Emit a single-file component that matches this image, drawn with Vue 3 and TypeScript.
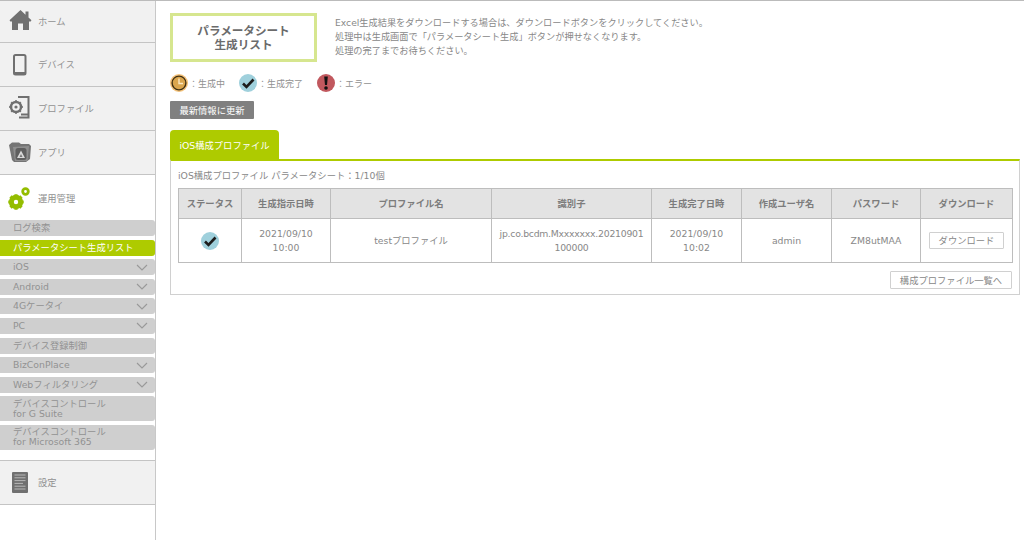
<script setup lang="ts">
const subItems = [
  { label: 'ログ検索' },
  { label: 'パラメータシート生成リスト', active: true },
  { label: 'iOS', chev: true },
  { label: 'Android', chev: true },
  { label: '4Gケータイ', chev: true },
  { label: 'PC', chev: true },
  { label: 'デバイス登録制御' },
  { label: 'BizConPlace', chev: true },
  { label: 'Webフィルタリング', chev: true },
  { label: 'デバイスコントロール\nfor G Suite', tall: true },
  { label: 'デバイスコントロール\nfor Microsoft 365', tall: true },
]
const headers = ['ステータス', '生成指示日時', 'プロファイル名', '識別子', '生成完了日時', '作成ユーザ名', 'パスワード', 'ダウンロード']
const colWidths = [63, 89, 161, 160, 90, 90, 89, 92]
</script>

<template>
  <div class="page">
    <aside class="side">
      <a class="nav">
        <svg class="ico" width="32" height="32" viewBox="0 0 32 32"><path d="M16.500 5 L21.500 9.700 V6.500 H24.500 V12.500 L27.500 15.300 L26 17 L25 16 V25 H19 V18.500 H14 V25 H8 V16 L7 17 L5.500 15.300 Z" fill="#707070"/></svg>
        <span>ホーム</span>
      </a>
      <a class="nav">
        <svg class="ico" width="32" height="32" viewBox="0 0 32 32"><rect x="10" y="7" width="11.500" height="19.500" rx="1.500" fill="none" stroke="#707070" stroke-width="2" /><rect x="10" y="24" width="11.500" height="3" fill="#707070"/></svg>
        <span>デバイス</span>
      </a>
      <a class="nav">
        <svg class="ico" width="32" height="32" viewBox="0 0 32 32"><path d="M14 5 H24.500 V25.500 H15" fill="none" stroke="#707070" stroke-width="2"/><path d="M17 22.500H24" stroke="#707070" stroke-width="2"/><circle cx="12" cy="15" r="5" fill="#f1f1f1" stroke="#707070" stroke-width="2.500"/><circle cx="12" cy="15" r="1.600" fill="#707070"/><path d="M12 8.200V10M12 20V21.800M5.200 15H7M17 15H18.800M7.200 10.200L8.500 11.500M15.500 18.500L16.800 19.800M7.200 19.800L8.500 18.500M15.500 11.500L16.800 10.200" stroke="#707070" stroke-width="2"/></svg>
        <span>プロファイル</span>
      </a>
      <a class="nav">
        <svg class="ico" width="32" height="32" viewBox="0 0 32 32"><path d="M5 9 L8 6.500 H15 L17 8 H25 L27 10 L26 23 L22 26 H10 L8 24 Z" fill="#757575"/><path d="M9 11 L25 10 L23.500 25 H11 Z" fill="#8f8f8f"/><rect x="11.500" y="12" width="11" height="12" rx="2.500" fill="#5f5f5f"/><path d="M17 14.500 L21 22 H13 Z" fill="#d8d8d8"/><path d="M17 18 L18.500 21 H15.500 Z" fill="#777"/></svg>
        <span>アプリ</span>
      </a>
      <a class="nav current">
        <svg class="ico" width="32" height="32" viewBox="0 0 32 32">
          <circle cx="12" cy="20" r="4.700" fill="none" stroke="#94bd00" stroke-width="5"/>
          <path d="M12 12.300V15M12 25V27.700M4.300 20H7M17 20H19.700M6.500 14.500L8.500 16.500M15.500 23.500L17.500 25.500M6.500 25.500L8.500 23.500M15.500 16.500L17.500 14.500" stroke="#94bd00" stroke-width="3.200"/>
          <circle cx="21.500" cy="9.500" r="2.800" fill="none" stroke="#94bd00" stroke-width="2.800"/>
        </svg>
        <span>運用管理</span>
      </a>
      <ul class="sub">
        <li v-for="item in subItems" :key="item.label" :class="{ active: item.active, tall: item.tall }">
          <span class="sub-label">{{ item.label }}</span>
          <svg v-if="item.chev" class="chev" width="12" height="7" viewBox="0 0 12 7"><path d="M1 1 L6 6 L11 1" fill="none" stroke="#999" stroke-width="1.100"/></svg>
        </li>
      </ul>
      <a class="nav setting">
        <svg class="ico" width="32" height="32" viewBox="0 0 32 32"><rect x="8" y="6" width="16" height="21" rx="1" fill="#707070"/><path d="M10.500 9H21.500M10.500 11.800H21.500M10.500 14.600H21.500M10.500 17.400H19M10.500 20.200H21.500M10.500 23H21.500" stroke="#b8b8b8" stroke-width="1"/></svg>
        <span>設定</span>
      </a>
    </aside>

    <main class="main">
      <header class="head">
        <h1 class="title">パラメータシート<br />生成リスト</h1>
        <p class="desc">Excel生成結果をダウンロードする場合は、ダウンロードボタンをクリックしてください。<br />処理中は生成画面で「パラメータシート生成」ボタンが押せなくなります。<br />処理の完了までお待ちください。</p>
      </header>

      <div class="legend">
        <span class="leg">
          <svg width="18" height="18" viewBox="0 0 18 18"><circle cx="9" cy="9" r="9" fill="#f4c27a"/><circle cx="9" cy="9" r="6.900" fill="#dba64e" stroke="#3f3014" stroke-width="1.400"/><path d="M9 4.500V9.500H13" fill="none" stroke="#fbe9c4" stroke-width="1.400"/></svg>
          <span>：生成中</span>
        </span>
        <span class="leg">
          <svg width="18" height="18" viewBox="0 0 18 18"><circle cx="9" cy="9" r="9" fill="#9fd0dc"/><path d="M4 9.500L7.500 13L14.500 5.500" fill="none" stroke="#1c1c1c" stroke-width="2.600"/></svg>
          <span>：生成完了</span>
        </span>
        <span class="leg">
          <svg width="18" height="18" viewBox="0 0 18 18"><circle cx="9" cy="9" r="9" fill="#c1585e"/><path d="M7.200 2.500H10.800L10 11H8Z" fill="#111"/><circle cx="9" cy="14" r="1.800" fill="#111"/></svg>
          <span>：エラー</span>
        </span>
      </div>

      <button class="refresh" type="button">最新情報に更新</button>

      <div class="tabs"><span class="tab">iOS構成プロファイル</span></div>

      <section class="panel">
        <p class="count">iOS構成プロファイル パラメータシート：1/10個</p>
        <table class="tbl">
          <colgroup>
            <col v-for="(w, i) in colWidths" :key="i" :style="{ width: w + 'px' }" />
          </colgroup>
          <thead>
            <tr><th v-for="h in headers" :key="h">{{ h }}</th></tr>
          </thead>
          <tbody>
            <tr>
              <td><svg class="status" width="18" height="18" viewBox="0 0 18 18"><circle cx="9" cy="9" r="9" fill="#9fd0dc"/><path d="M4 9.500L7.500 13L14.500 5.500" fill="none" stroke="#1c1c1c" stroke-width="2.600"/></svg></td>
              <td>2021/09/10<br />10:00</td>
              <td>testプロファイル</td>
              <td class="ident">jp.co.bcdm.Mxxxxxxx.20210901<br />100000</td>
              <td>2021/09/10<br />10:02</td>
              <td>admin</td>
              <td>ZM8utMAA</td>
              <td><button class="btn dl" type="button">ダウンロード</button></td>
            </tr>
          </tbody>
        </table>
        <div class="foot"><button class="btn list" type="button">構成プロファイル一覧へ</button></div>
      </section>
    </main>
  </div>
</template>

<style>
html, body { margin: 0; background: #fff; }
</style>

<style scoped>
.page {
  display: flex;
  width: 1024px;
  height: 540px;
  overflow: hidden;
  font-family: "DejaVu Sans", "Noto Sans CJK JP", sans-serif;
  font-size: 9.300px;
  color: #888;
  border-top: 1px solid #bbb;
  box-sizing: border-box;
}
.side {
  width: 156px;
  flex: none;
  border-right: 1px solid #c8c8c8;
  box-sizing: border-box;
}
.nav {
  display: flex;
  align-items: center;
  height: 44px;
  box-sizing: border-box;
  background: #f1f1f1;
  border-bottom: 1px solid #c4c4c4;
  padding: 0 0 2px 4px;
  gap: 2px;
}
.nav:first-child { height: 42px; }
.nav span { font-size: 9.300px; color: #919191; }
.ico { flex: none; }
.current { background: #fff; border-bottom: 0; height: 45px; padding-bottom: 0; }
.setting { margin-top: 10px; border-top: 1px solid #c4c4c4; height: 45px; padding-bottom: 0; }
.sub {
  list-style: none;
  margin: 0;
  padding: 0;
  display: flex;
  flex-direction: column;
  gap: 3.600px;
}
.sub li {
  display: flex;
  align-items: center;
  justify-content: space-between;
  height: 16px;
  padding: 0 7px 0 13px;
  background: #cfcfcf;
  border-radius: 0 3px 3px 0;
  font-size: 9.300px;
  line-height: 10px;
  color: #929292;
}
.sub li.active { background: #aecb00; color: #fff; }
.sub li.tall { height: 25px; }
.sub-label { white-space: pre-line; }
.main {
  flex: 1;
  min-width: 0;
  padding: 12px 4px 0 14px;
}
.head { display: flex; align-items: center; gap: 18px; }
.title {
  width: 147px;
  height: 49px;
  box-sizing: border-box;
  margin: 0;
  padding-top: 8px;
  text-align: center;
  border: 3px solid #d6e68f;
  font-size: 11.600px;
  line-height: 14px;
  font-weight: 700;
  color: #6b6b6b;
}
.desc {
  margin: 0 0 2px;
  font-size: 9.200px;
  line-height: 14px;
  color: #888;
}
.legend { display: flex; gap: 14px; margin-top: 12px; align-items: center; height: 18px; }
.leg { display: flex; align-items: center; gap: 1px; font-size: 9px; color: #919191; }
.refresh {
  display: block;
  margin-top: 9px;
  width: 84px;
  height: 18px;
  padding: 0;
  border: 0;
  border-radius: 1px;
  background: #808080;
  color: #fff;
  font: inherit;
}
.tabs { margin-top: 11px; display: flex; }
.tab {
  width: 109px;
  height: 29px;
  display: flex;
  align-items: center;
  justify-content: center;
  background: #aecb00;
  color: #fff;
  border-radius: 4px 4px 0 0;
  font-size: 9.300px;
}
.panel {
  border: 1px solid #d0d0d0;
  border-top: 2px solid #aecb00;
  height: 136px;
  box-sizing: border-box;
  padding: 0 7px;
}
.count { margin: 0; height: 27px; line-height: 29px; font-size: 9.300px; color: #888; }
.tbl {
  table-layout: fixed;
  width: 834px;
  border-collapse: collapse;
  font-size: 9.300px;
  color: #888;
}
.tbl th, .tbl td {
  border: 1px solid #bdbdbd;
  text-align: center;
  vertical-align: middle;
  padding: 0;
  line-height: 14px;
}
.tbl th { height: 29px; background: #e3e3e3; font-weight: 700; color: #7c7c7c; }
.tbl td { height: 43px; }
.tbl td.ident { letter-spacing: -0.250px; }
.status { display: block; margin: 0 auto; }
.btn {
  height: 17px;
  padding: 0;
  background: #fff;
  border: 1px solid #d0d0d0;
  border-radius: 1px;
  color: #888;
  font: inherit;
}
.dl { width: 75px; }
.foot { display: flex; justify-content: flex-end; margin-top: 8px; }
.list { width: 122px; height: 18px; }
</style>
